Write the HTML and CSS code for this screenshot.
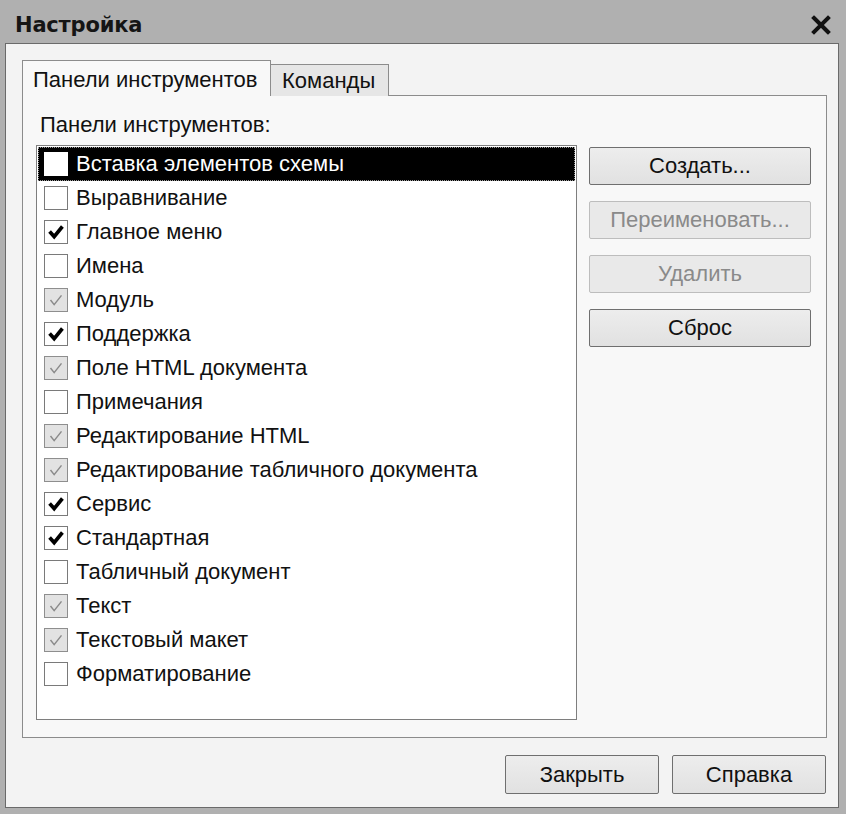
FILE: index.html
```html
<!DOCTYPE html>
<html lang="ru">
<head>
<meta charset="utf-8">
<title>Настройка</title>
<link rel="stylesheet" href="styles.css">
</head>
<body>
<div class="window">
  <div class="titlebar">
    <span class="title">Настройка</span>
    <svg class="close" width="20" height="20" viewBox="0 0 20 20"><path d="M3 3 L17 17 M17 3 L3 17" stroke="#111" stroke-width="4" stroke-linecap="square" fill="none"/></svg>
  </div>
  <div class="client">
    <div class="tabs">
      <div class="tab active">Панели инструментов</div>
      <div class="tab">Команды</div>
    </div>
    <div class="panel">
      <div class="label">Панели инструментов:</div>
      <div class="content">
        <div class="listbox">
          <div class="row selected"><span class="cb"></span><span>Вставка элементов схемы</span></div>
          <div class="row"><span class="cb"></span><span>Выравнивание</span></div>
          <div class="row"><span class="cb on"><svg viewBox="0 0 24 24"><path d="M5 11.5 L10 17 L19 6" stroke="#000" stroke-width="4" fill="none"/></svg></span><span>Главное меню</span></div>
          <div class="row"><span class="cb"></span><span>Имена</span></div>
          <div class="row"><span class="cb gray"><svg viewBox="0 0 24 24"><path d="M6 12 L10 17 L18 7" stroke="#8a8a8a" stroke-width="1.6" fill="none"/></svg></span><span>Модуль</span></div>
          <div class="row"><span class="cb on"><svg viewBox="0 0 24 24"><path d="M5 11.5 L10 17 L19 6" stroke="#000" stroke-width="4" fill="none"/></svg></span><span>Поддержка</span></div>
          <div class="row"><span class="cb gray"><svg viewBox="0 0 24 24"><path d="M6 12 L10 17 L18 7" stroke="#8a8a8a" stroke-width="1.6" fill="none"/></svg></span><span>Поле HTML документа</span></div>
          <div class="row"><span class="cb"></span><span>Примечания</span></div>
          <div class="row"><span class="cb gray"><svg viewBox="0 0 24 24"><path d="M6 12 L10 17 L18 7" stroke="#8a8a8a" stroke-width="1.6" fill="none"/></svg></span><span>Редактирование HTML</span></div>
          <div class="row"><span class="cb gray"><svg viewBox="0 0 24 24"><path d="M6 12 L10 17 L18 7" stroke="#8a8a8a" stroke-width="1.6" fill="none"/></svg></span><span>Редактирование табличного документа</span></div>
          <div class="row"><span class="cb on"><svg viewBox="0 0 24 24"><path d="M5 11.5 L10 17 L19 6" stroke="#000" stroke-width="4" fill="none"/></svg></span><span>Сервис</span></div>
          <div class="row"><span class="cb on"><svg viewBox="0 0 24 24"><path d="M5 11.5 L10 17 L19 6" stroke="#000" stroke-width="4" fill="none"/></svg></span><span>Стандартная</span></div>
          <div class="row"><span class="cb"></span><span>Табличный документ</span></div>
          <div class="row"><span class="cb gray"><svg viewBox="0 0 24 24"><path d="M6 12 L10 17 L18 7" stroke="#8a8a8a" stroke-width="1.6" fill="none"/></svg></span><span>Текст</span></div>
          <div class="row"><span class="cb gray"><svg viewBox="0 0 24 24"><path d="M6 12 L10 17 L18 7" stroke="#8a8a8a" stroke-width="1.6" fill="none"/></svg></span><span>Текстовый макет</span></div>
          <div class="row"><span class="cb"></span><span>Форматирование</span></div>
        </div>
        <div class="side">
          <button class="btn">Создать...</button>
          <button class="btn disabled">Переименовать...</button>
          <button class="btn disabled">Удалить</button>
          <button class="btn">Сброс</button>
        </div>
      </div>
    </div>
    <div class="footer">
      <button class="btn foot">Закрыть</button>
      <button class="btn foot">Справка</button>
    </div>
  </div>
</div>
</body>
</html>
```
FILE: styles.css
```css
html, body {
  margin: 0;
  padding: 0;
}
body {
  width: 846px;
  height: 814px;
  background: #ababab;
  font-family: "Liberation Sans", Arial, sans-serif;
  color: #111;
  overflow: hidden;
}
.window {
  width: 846px;
  height: 814px;
  display: flex;
  flex-direction: column;
  box-sizing: border-box;
  padding: 0 7px 6px 5px;
  background: #b0b0b0;
}
.titlebar {
  height: 43px;
  flex: none;
  display: flex;
  align-items: center;
  justify-content: space-between;
  padding: 0 8px 0 10px;
  box-sizing: border-box;
}
.title {
  font-family: "DejaVu Sans", "Liberation Sans", sans-serif;
  font-weight: bold;
  font-size: 21px;
  letter-spacing: -0.2px;
  margin-top: 6px;
  color: #151515;
}
.close {
  margin-top: 6px;
}
.client {
  flex: 1;
  background: #f3f3f3;
  border: 1px solid #6a6a6a;
  display: flex;
  flex-direction: column;
  padding: 16px 12px 12px 16px;
}
.tabs {
  display: flex;
  align-items: flex-end;
  height: 36px;
  margin-bottom: -1px;
  position: relative;
  z-index: 1;
}
.tab {
  font-size: 22px;
  box-sizing: border-box;
  border: 1px solid #8c8c8c;
  border-bottom: none;
  background: #e6e6e6;
  height: 32px;
  padding: 3px 12px 0 10px;
  white-space: nowrap;
}
.tab.active {
  background: #f8f8f8;
  height: 36px;
  width: 249px;
  padding: 6px 0 0 10px;
  border-right: 1px solid #8c8c8c;
}
.tab:not(.active) {
  border-left: none;
  width: 118px;
  padding-left: 11px;
}
.panel {
  flex: none;
  height: 643px;
  box-sizing: border-box;
  background: #f8f8f8;
  border: 1px solid #8c8c8c;
  width: 805px;
  padding: 17px 14px 17px 13px;
  display: flex;
  flex-direction: column;
}
.label {
  font-size: 22px;
  line-height: 24px;
  padding-left: 4px;
  margin-bottom: 8px;
}
.content {
  flex: 1;
  display: flex;
  gap: 12px;
}
.listbox {
  width: 541px;
  box-sizing: border-box;
  background: #fff;
  border: 1px solid #7e7e7e;
  padding: 1px;
  display: flex;
  flex-direction: column;
}
.row {
  height: 34px;
  box-sizing: border-box;
  display: flex;
  align-items: center;
  gap: 8px;
  padding-left: 6px;
  font-size: 22px;
  white-space: nowrap;
}
.row.selected {
  background: #000;
  color: #fff;
  border: 1px dotted #9a9a9a;
  padding-left: 5px;
}
.cb {
  width: 24px;
  height: 24px;
  box-sizing: border-box;
  border: 1px solid #7a7a7a;
  background: #fff;
  display: inline-flex;
  flex: none;
}
.cb svg {
  width: 22px;
  height: 22px;
}
.cb.gray {
  background: #e2e2e2;
  border-color: #8e8e8e;
}
.row.selected .cb {
  border-color: #fff;
}
.side {
  width: 222px;
  display: flex;
  flex-direction: column;
  gap: 16px;
  padding-top: 2px;
}
.btn {
  font-family: "Liberation Sans", Arial, sans-serif;
  font-size: 22px;
  color: #111;
  height: 38px;
  box-sizing: border-box;
  border: 1px solid #6f6f6f;
  border-radius: 2px;
  background: linear-gradient(#ededed, #e1e1e1);
  padding: 0;
}
.btn.disabled {
  color: #8a8a8a;
  border-color: #bdbdbd;
  background: #e9e9e9;
}
.footer {
  margin-top: 17px;
  display: flex;
  justify-content: flex-end;
  gap: 13px;
}
.btn.foot {
  width: 154px;
  height: 39px;
}
```
